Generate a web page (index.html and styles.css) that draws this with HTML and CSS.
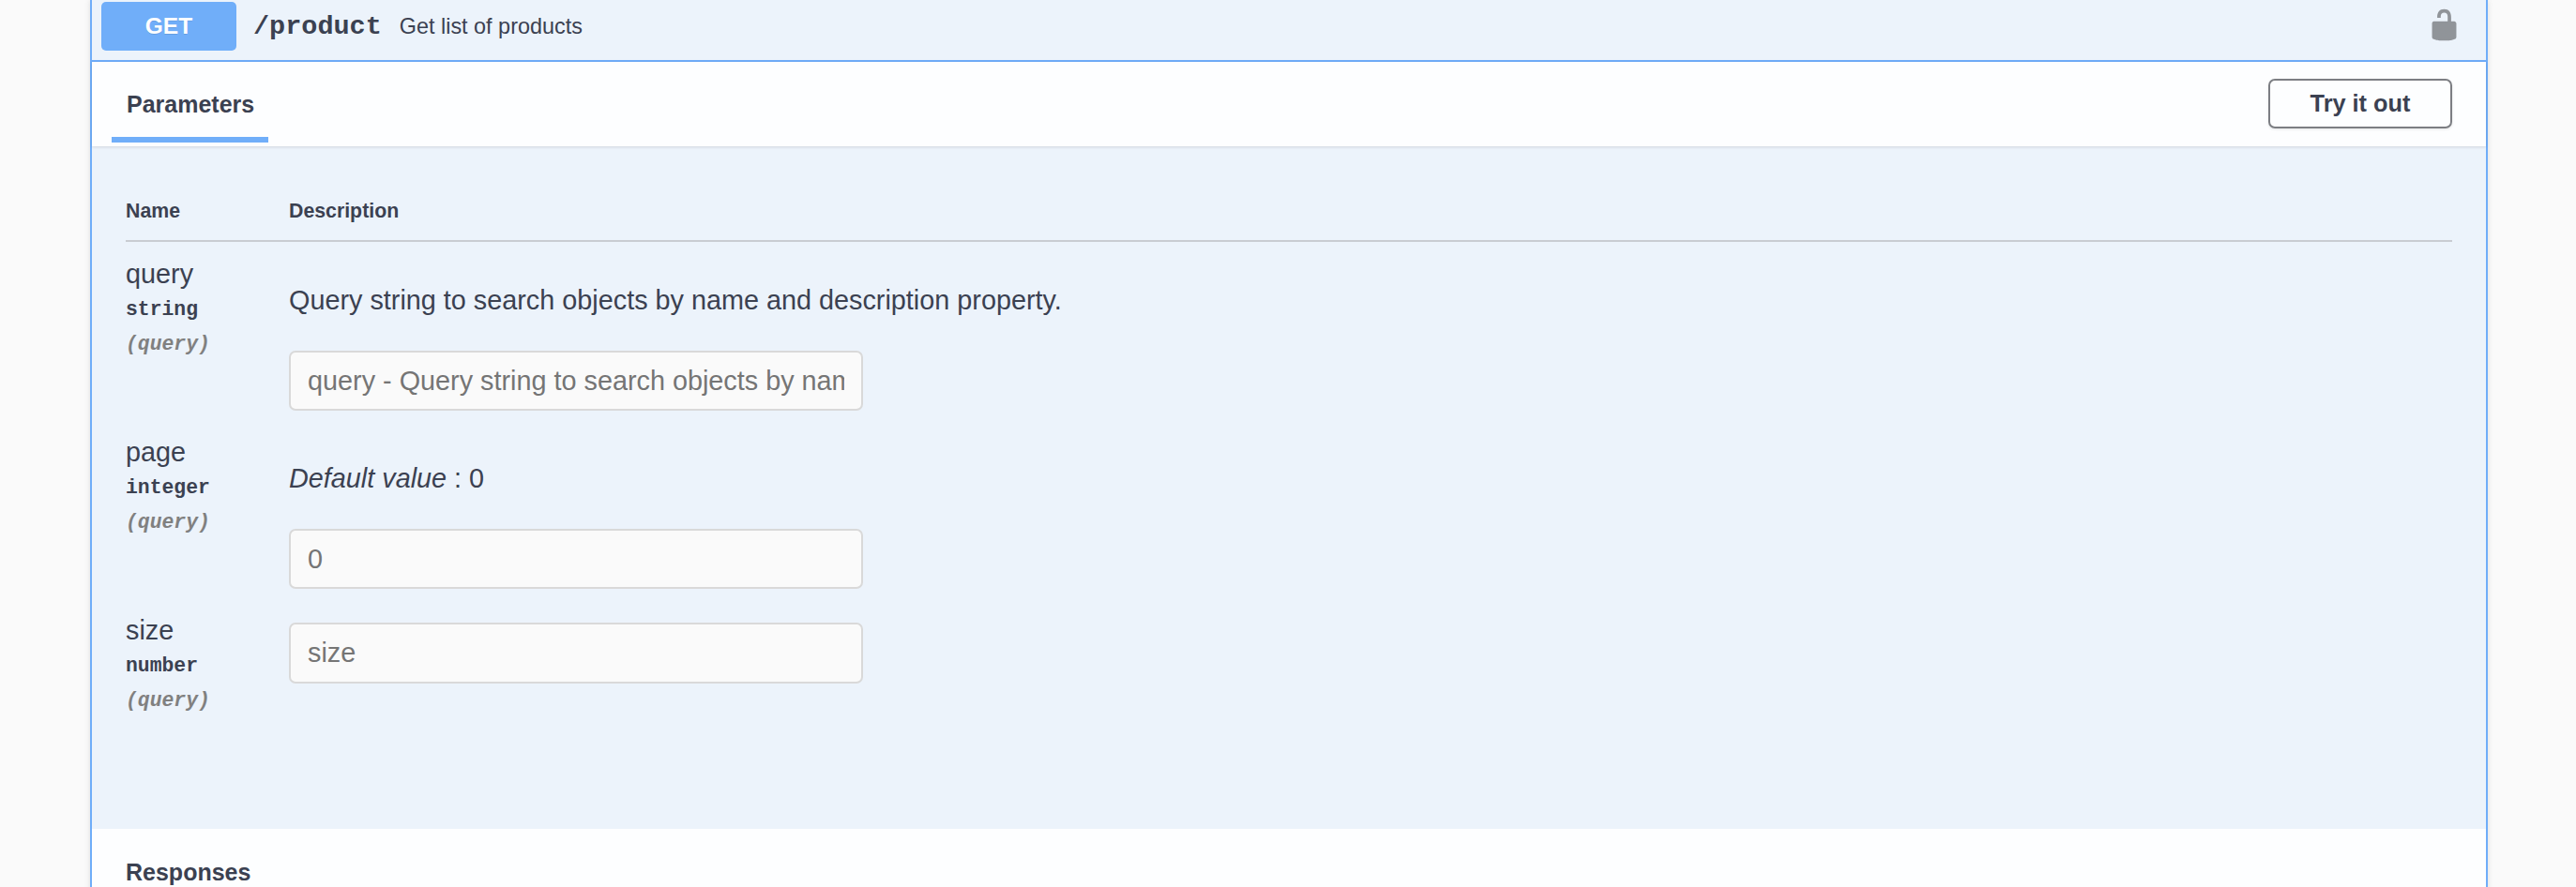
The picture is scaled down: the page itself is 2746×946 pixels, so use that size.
FILE: index.html
```html
<!DOCTYPE html>
<html lang="en">
<head>
<meta charset="utf-8">
<title>Swagger UI</title>
<link rel="stylesheet" href="styles.css">
</head>
<body>
<main class="opblock">
  <header class="summary">
    <span class="method">GET</span>
    <span class="path">/product</span>
    <span class="desc">Get list of products</span>
    <svg class="lock" viewBox="0 0 20 20" aria-hidden="true"><path d="M15.8 8H14V5.6C14 2.703 12.665 1 10 1 7.334 1 6 2.703 6 5.6V6h2v-.801C8 3.754 8.797 3 10 3c1.203 0 2 .754 2 2.199V8H4c-.553 0-1 .646-1 1.199V17c0 .549.428 1.139.951 1.307l1.197.387C5.672 18.861 6.55 19 7.1 19h5.8c.549 0 1.428-.139 1.951-.307l1.196-.387c.524-.167.953-.757.953-1.306V9.199C17 8.646 16.352 8 15.8 8z"/></svg>
  </header>
  <div class="tabbar">
    <div class="tab">Parameters</div>
    <button class="try" type="button">Try it out</button>
  </div>
  <section class="params">
    <div class="thead"><div>Name</div><div>Description</div></div>
    <div class="row">
      <div class="pname">
        <div class="pn">query</div>
        <div class="ptype">string</div>
        <div class="pin">(query)</div>
      </div>
      <div class="pdesc">
        <p class="ptext">Query string to search objects by name and description property.</p>
        <input class="field" type="text" placeholder="query - Query string to search objects by name and description property.">
      </div>
    </div>
    <div class="row">
      <div class="pname">
        <div class="pn">page</div>
        <div class="ptype">integer</div>
        <div class="pin">(query)</div>
      </div>
      <div class="pdesc">
        <p class="ptext"><em>Default value</em> : 0</p>
        <input class="field" type="text" placeholder="0">
      </div>
    </div>
    <div class="row">
      <div class="pname">
        <div class="pn">size</div>
        <div class="ptype">number</div>
        <div class="pin">(query)</div>
      </div>
      <div class="pdesc">
        <input class="field field-tall" type="text" placeholder="size">
      </div>
    </div>
  </section>
  <section class="responses">
    <h4 class="rtitle">Responses</h4>
  </section>
</main>
</body>
</html>
```
FILE: styles.css
```css
html, body {
  margin: 0;
  height: 946px;
  overflow: hidden;
  background: #fafafa;
}
body {
  font-family: "Liberation Sans", Arial, sans-serif;
  color: #3b4151;
}
.opblock {
  margin-left: 96px;
  width: 2556px;
  box-sizing: border-box;
  border-left: 2px solid #6fadf9;
  border-right: 2px solid #6fadf9;
  background: #fdfeff;
  box-shadow: 0 0 6px rgba(0, 0, 0, .12);
}
.summary {
  height: 62px;
  padding: 2px 26px 0 10px;
  display: flex;
  align-items: flex-start;
  background: #ecf3fb;
  border-bottom: 2px solid #6fadf9;
}
.method {
  width: 144px;
  height: 52px;
  line-height: 52px;
  border-radius: 5px;
  background: #70aef9;
  color: #fff;
  font-weight: 700;
  font-size: 24.5px;
  text-align: center;
  text-shadow: 0 1px 0 rgba(0, 0, 0, .1);
}
.path {
  margin-left: 18px;
  font-family: "Liberation Mono", "Courier New", monospace;
  font-weight: 700;
  font-size: 28.5px;
  line-height: 54px;
}
.desc {
  margin-left: 19px;
  font-size: 23.4px;
  line-height: 52px;
}
.lock {
  margin-left: auto;
  width: 37px;
  height: 37px;
  margin-top: 6px;
  fill: #909499;
}
.tabbar {
  height: 90px;
  display: flex;
  align-items: flex-start;
  justify-content: space-between;
  padding: 0 36px 0 21px;
  position: relative;
  box-shadow: 0 1px 3px rgba(0, 0, 0, .12);
  background: #fdfeff;
}
.tab {
  width: 167px;
  height: 86px;
  padding-left: 16px;
  box-sizing: border-box;
  border-bottom: 6px solid #70aef9;
  line-height: 90px;
  font-weight: 700;
  font-size: 25px;
}
.try {
  margin-top: 18px;
  width: 196px;
  height: 53px;
  padding: 0;
  border: 2px solid #7c7e83;
  border-radius: 7px;
  background: transparent;
  box-shadow: 0 1px 3px rgba(0, 0, 0, .1);
  font-family: inherit;
  font-weight: 700;
  font-size: 25.3px;
  color: #3b4151;
}
.params {
  background: #ecf3fb;
  padding: 0 36px 118px 36px;
}
.thead {
  display: grid;
  grid-template-columns: 174px 1fr;
  align-items: center;
  height: 102px;
  padding-top: 38px;
  box-sizing: border-box;
  border-bottom: 2px solid #c9ccd2;
  font-weight: 700;
  font-size: 21.3px;
}
.row {
  display: grid;
  grid-template-columns: 174px 1fr;
}
.pname {
  padding-top: 16px;
}
.pn {
  font-size: 28.8px;
  line-height: 36px;
  margin-bottom: 2px;
}
.ptype {
  font-family: "Liberation Mono", "Courier New", monospace;
  font-weight: 700;
  font-size: 21.4px;
  line-height: 37px;
}
.pin {
  font-family: "Liberation Mono", "Courier New", monospace;
  font-weight: 700;
  font-style: italic;
  font-size: 21.4px;
  line-height: 37px;
  color: #808080;
}
.pdesc {
  padding: 26px 0 10px;
}
.ptext {
  margin: 0;
  padding: 18px 0 36px;
  font-size: 28.8px;
  line-height: 36px;
}
.field {
  display: block;
  width: 612px;
  height: 64px;
  box-sizing: border-box;
  padding: 0 18px;
  border: 2px solid #d9d9d9;
  border-radius: 7px;
  background: #fafafa;
  font-family: inherit;
  font-size: 28.8px;
  color: #3b4151;
}
.field::placeholder {
  color: #757575;
  opacity: 1;
}
.field-tall {
  height: 65px;
}
.responses {
  padding: 0 36px 30px;
  background: #fdfeff;
}
.rtitle {
  margin: 0;
  padding-top: 29px;
  font-size: 25px;
  line-height: 34px;
  font-weight: 700;
}
```
